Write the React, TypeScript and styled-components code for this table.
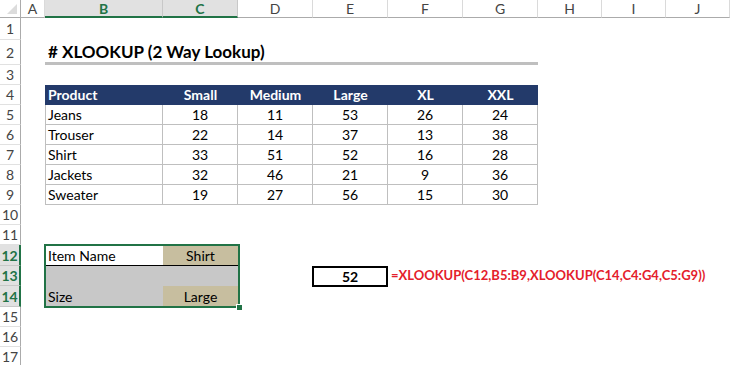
import React from 'react';
import styled, { createGlobalStyle, css } from 'styled-components';

const GlobalStyle = createGlobalStyle`
  html, body {
    margin: 0;
    padding: 0;
    background: #fff;
  }
  body {
    font-family: Lato, 'Open Sans', sans-serif;
    overflow: hidden;
  }
`;

const COLS = ['A', 'B', 'C', 'D', 'E', 'F', 'G', 'H', 'I', 'J'];
const COL_WIDTHS = [24, 118, 75, 75, 75, 75, 75, 64, 64, 64];
const ROW_HEIGHTS = [22, 25, 20, 20, 20, 20, 20, 20, 20, 20, 20, 21, 20, 21, 20, 20, 20];
const SELECTED_COLS = ['B', 'C'];
const SELECTED_ROWS = [12, 13, 14];

const GREEN = '#217346';
const NAVY = '#233a6a';
const GRID = '#bfbfbf';
const TAN = '#c7be9f';
const SHADE = '#c8c8c8';

const SIZES = ['Small', 'Medium', 'Large', 'XL', 'XXL'];
const PRODUCTS: [string, number[]][] = [
  ['Jeans', [18, 11, 53, 26, 24]],
  ['Trouser', [22, 14, 37, 13, 38]],
  ['Shirt', [33, 51, 52, 16, 28]],
  ['Jackets', [32, 46, 21, 9, 36]],
  ['Sweater', [19, 27, 56, 15, 30]],
];

const col = (letter: string) => COLS.indexOf(letter);

type Place = { $row: number; $col: number; $span?: number };

const placed = css<Place>`
  grid-row: ${(p) => p.$row + 1};
  grid-column: ${(p) => p.$col + 2} / span ${(p) => p.$span ?? 1};
`;

const Sheet = styled.div`
  display: grid;
  grid-template-columns: 21px ${COL_WIDTHS.map((w) => `${w}px`).join(' ')};
  grid-template-rows: 18px ${ROW_HEIGHTS.map((h) => `${h}px`).join(' ')};
  width: 730px;
  height: 365px;
  overflow: hidden;
  background: #fff;
`;

const Corner = styled.div`
  grid-row: 1;
  grid-column: 1;
  position: relative;
  border-right: 1px solid #ababab;
  border-bottom: 1px solid #ababab;

  &::after {
    content: '';
    position: absolute;
    right: 3px;
    bottom: 3px;
    border-style: solid;
    border-width: 0 0 10px 10px;
    border-color: transparent transparent #dcdcdc transparent;
  }
`;

const ColHead = styled.div<{ $col: number; $selected?: boolean }>`
  grid-row: 1;
  grid-column: ${(p) => p.$col + 2};
  display: flex;
  align-items: center;
  justify-content: center;
  font-size: 14px;
  color: #444;
  border-right: 1px solid #dadada;
  border-bottom: 1px solid #ababab;
  ${(p) =>
    p.$selected &&
    css`
      background: #e1e1e1;
      color: ${GREEN};
      font-weight: 700;
      border-right-color: #c8c8c8;
      border-bottom: 2px solid ${GREEN};
    `}
`;

const RowHead = styled.div<{ $row: number; $selected?: boolean }>`
  grid-row: ${(p) => p.$row + 1};
  grid-column: 1;
  display: flex;
  align-items: center;
  justify-content: center;
  font-size: 14px;
  color: #444;
  border-right: 1px solid #ababab;
  border-bottom: 1px solid #e1e1e1;
  ${(p) =>
    p.$selected &&
    css`
      background: #e1e1e1;
      color: ${GREEN};
      font-weight: 700;
      border-bottom-color: #c8c8c8;
      border-right: 2px solid ${GREEN};
    `}
`;

const Cell = styled.div<Place & { $align?: 'left' | 'center'; $bold?: boolean }>`
  ${placed}
  display: flex;
  align-items: flex-end;
  justify-content: ${(p) => (p.$align === 'center' ? 'center' : 'flex-start')};
  padding: 0 3px 2px;
  font-size: 14px;
  line-height: 16px;
  font-weight: ${(p) => (p.$bold ? 700 : 400)};
  color: #000;
  white-space: nowrap;
  min-width: 0;
`;

const Title = styled(Cell)`
  font-size: 17px;
  font-weight: 700;
  line-height: 18px;
  padding-bottom: 1px;
  border-bottom: 3px solid ${GRID};
`;

const HeadCell = styled(Cell)`
  background: ${NAVY};
  color: #fff;
  font-weight: 700;
`;

const DataCell = styled(Cell)<{ $first?: boolean }>`
  border-right: 1px solid ${GRID};
  border-bottom: 1px solid ${GRID};
  padding-bottom: 1px;
  ${(p) =>
    p.$first &&
    css`
      border-left: 1px solid ${GRID};
      padding-left: 2px;
    `}
`;

const InputCell = styled(Cell)<{ $fill?: 'tan' | 'shade'; $rule?: boolean }>`
  background: ${(p) => (p.$fill === 'tan' ? TAN : p.$fill === 'shade' ? SHADE : '#fff')};
  ${(p) =>
    p.$rule &&
    css`
      border-bottom: 1px solid #000;
      padding-bottom: 1px;
    `}
`;

const ResultCell = styled(Cell)`
  margin: 0 0 -1px -1px;
  border: 2px solid #000;
  padding-bottom: 0;
  font-weight: 700;
`;

const Formula = styled(Cell)`
  color: #e4202b;
  font-size: 13px;
  font-weight: 700;
  letter-spacing: 0;
  padding-bottom: 3px;
`;

const Selection = styled.div`
  grid-row: ${12 + 1} / span 3;
  grid-column: ${col('B') + 2} / span 2;
  margin: -1px -2px -1px -1px;
  border: 2px solid ${GREEN};
  position: relative;
  pointer-events: none;
  z-index: 2;
`;

const FillHandle = styled.span`
  position: absolute;
  right: -5px;
  bottom: -5px;
  width: 5px;
  height: 5px;
  background: ${GREEN};
  border: 1px solid #fff;
`;

export default function App() {
  return (
    <>
      <GlobalStyle />
      <Sheet>
        <Corner />
        {COLS.map((c, i) => (
          <ColHead key={c} $col={i} $selected={SELECTED_COLS.includes(c)}>
            {c}
          </ColHead>
        ))}
        {ROW_HEIGHTS.map((_, i) => (
          <RowHead key={i} $row={i + 1} $selected={SELECTED_ROWS.includes(i + 1)}>
            {i + 1}
          </RowHead>
        ))}

        <Title $row={2} $col={col('B')} $span={6}>
          # XLOOKUP (2 Way Lookup)
        </Title>

        <HeadCell $row={4} $col={col('B')}>
          Product
        </HeadCell>
        {SIZES.map((s, i) => (
          <HeadCell key={s} $row={4} $col={col('C') + i} $align="center">
            {s}
          </HeadCell>
        ))}

        {PRODUCTS.map(([name, values], r) => (
          <React.Fragment key={name}>
            <DataCell $row={5 + r} $col={col('B')} $first>
              {name}
            </DataCell>
            {values.map((v, i) => (
              <DataCell key={i} $row={5 + r} $col={col('C') + i} $align="center">
                {v}
              </DataCell>
            ))}
          </React.Fragment>
        ))}

        <InputCell $row={12} $col={col('B')} $rule>
          Item Name
        </InputCell>
        <InputCell $row={12} $col={col('C')} $align="center" $fill="tan" $rule>
          Shirt
        </InputCell>
        <InputCell $row={13} $col={col('B')} $fill="shade" />
        <InputCell $row={13} $col={col('C')} $fill="shade" />
        <InputCell $row={14} $col={col('B')} $fill="shade">
          Size
        </InputCell>
        <InputCell $row={14} $col={col('C')} $align="center" $fill="tan">
          Large
        </InputCell>
        <Selection>
          <FillHandle />
        </Selection>

        <ResultCell $row={13} $col={col('E')} $align="center">
          52
        </ResultCell>
        <Formula $row={13} $col={col('F')} $span={5}>
          =XLOOKUP(C12,B5:B9,XLOOKUP(C14,C4:G4,C5:G9))
        </Formula>
      </Sheet>
    </>
  );
}
